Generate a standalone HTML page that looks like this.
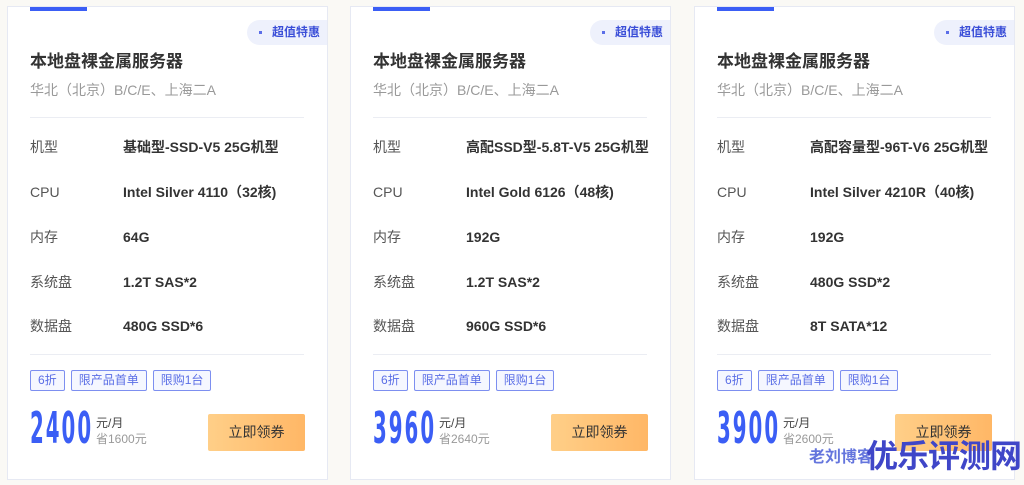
<!DOCTYPE html>
<html><head><meta charset="utf-8"><style>
*{margin:0;padding:0;box-sizing:border-box}
body{width:1024px;height:485px;background:#faf9f5;font-family:"Liberation Sans","Noto Sans CJK SC",sans-serif;position:relative;overflow:hidden}
.card{position:absolute;top:6px;width:321px;height:474px;background:#fff;border:1px solid #e6e9f3}
.bar{position:absolute;left:22px;top:0;width:57px;height:4px;background:#3b5ef5}
.badge{position:absolute;right:0;top:13px;width:80px;height:25px;background:#eef1fc;border-radius:13px 0 0 13px;color:#3b4fd8;font-size:12px;font-weight:bold;line-height:25px;padding-left:12px}
.badge i{display:inline-block;width:3px;height:3px;background:#5b6ee8;vertical-align:middle;margin-right:10px}
.title{position:absolute;left:22px;top:40px;font-size:17px;font-weight:bold;color:#333}
.sub{position:absolute;left:22px;top:73px;font-size:14px;color:#999}
.hr{position:absolute;left:22px;width:274px;height:1px;background:#ebedf3}
.row{position:absolute;left:22px;font-size:14px;color:#555;line-height:20px;height:20px}
.row b{position:absolute;left:93px;top:0;white-space:nowrap;color:#333}
.tags{position:absolute;left:22px;top:363px}
.tags span{display:inline-block;height:21px;line-height:19px;border:1px solid #7d8ff0;border-radius:2px;color:#5a6ee6;font-size:12px;padding:0 7px;margin-right:6px;background:#f5f7ff}
.price{position:absolute;left:22px;top:397px;font-family:"DejaVu Sans Condensed","Liberation Sans Narrow",sans-serif;font-size:44px;font-weight:bold;color:#3b5ef5;letter-spacing:4px;transform:scaleX(.5);transform-origin:left;line-height:50px;white-space:nowrap}
.unit{position:absolute;left:88px;top:408px;font-size:12px;color:#444;line-height:16px}
.unit span{color:#999}
.btn{position:absolute;left:200px;top:407px;width:97px;height:37px;border-radius:2px;background:linear-gradient(90deg,#ffcf88,#ffb766);color:#333;font-size:14px;text-align:center;line-height:37px}
</style></head><body>
<div class="card" style="left:7px">
<div class="bar"></div><div class="badge"><i></i>超值特惠</div>
<div class="title">本地盘裸金属服务器</div><div class="sub">华北（北京）B/C/E、上海二A</div>
<div class="hr" style="top:110px"></div>
<div class="row" style="top:130px">机型<b>基础型-SSD-V5 25G机型</b></div>
<div class="row" style="top:175px">CPU<b>Intel Silver 4110（32核)</b></div>
<div class="row" style="top:220px">内存<b>64G</b></div>
<div class="row" style="top:265px">系统盘<b>1.2T SAS*2</b></div>
<div class="row" style="top:309px">数据盘<b>480G SSD*6</b></div>
<div class="hr" style="top:347px"></div>
<div class="tags"><span>6折</span><span>限产品首单</span><span>限购1台</span></div>
<div class="price">2400</div><div class="unit">元/月<br><span>省1600元</span></div>
<div class="btn">立即领券</div>
</div>
<div class="card" style="left:350px">
<div class="bar"></div><div class="badge"><i></i>超值特惠</div>
<div class="title">本地盘裸金属服务器</div><div class="sub">华北（北京）B/C/E、上海二A</div>
<div class="hr" style="top:110px"></div>
<div class="row" style="top:130px">机型<b>高配SSD型-5.8T-V5 25G机型</b></div>
<div class="row" style="top:175px">CPU<b>Intel Gold 6126（48核)</b></div>
<div class="row" style="top:220px">内存<b>192G</b></div>
<div class="row" style="top:265px">系统盘<b>1.2T SAS*2</b></div>
<div class="row" style="top:309px">数据盘<b>960G SSD*6</b></div>
<div class="hr" style="top:347px"></div>
<div class="tags"><span>6折</span><span>限产品首单</span><span>限购1台</span></div>
<div class="price">3960</div><div class="unit">元/月<br><span>省2640元</span></div>
<div class="btn">立即领券</div>
</div>
<div class="card" style="left:694px">
<div class="bar"></div><div class="badge"><i></i>超值特惠</div>
<div class="title">本地盘裸金属服务器</div><div class="sub">华北（北京）B/C/E、上海二A</div>
<div class="hr" style="top:110px"></div>
<div class="row" style="top:130px">机型<b>高配容量型-96T-V6 25G机型</b></div>
<div class="row" style="top:175px">CPU<b>Intel Silver 4210R（40核)</b></div>
<div class="row" style="top:220px">内存<b>192G</b></div>
<div class="row" style="top:265px">系统盘<b>480G SSD*2</b></div>
<div class="row" style="top:309px">数据盘<b>8T SATA*12</b></div>
<div class="hr" style="top:347px"></div>
<div class="tags"><span>6折</span><span>限产品首单</span><span>限购1台</span></div>
<div class="price">3900</div><div class="unit">元/月<br><span>省2600元</span></div>
<div class="btn">立即领券</div>
</div>
<div style="position:absolute;left:809px;top:443px;font-size:16px;font-weight:bold;color:#4a5ed8;opacity:.85">老刘博客</div>
<div style="position:absolute;left:866px;top:436px;font-size:32px;font-weight:bold;color:#3f46c8;letter-spacing:-1px;line-height:40px">优乐评测网</div>
</body></html>
